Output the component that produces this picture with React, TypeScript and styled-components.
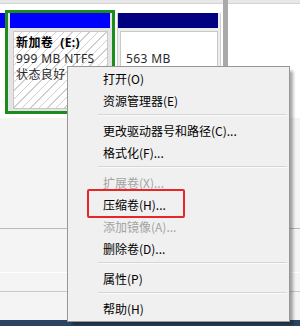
import styled, { createGlobalStyle } from "styled-components";

const Global = createGlobalStyle`
  html, body {
    margin: 0;
    padding: 0;
    background: #fff;
  }
`;

const Page = styled.div`
  position: relative;
  width: 300px;
  height: 326px;
  overflow: hidden;
  display: flex;
  flex-direction: column;
  background: #f4f4f4;
  font-family: "Noto Sans", "Noto Sans CJK SC", sans-serif;
`;

const DiskRow = styled.div`
  display: flex;
  height: 118px;
  background: #fff;
`;

const DiskCanvas = styled.div`
  width: 223px;
  display: flex;
  flex-direction: column;
`;

const TopStrip = styled.div`
  height: 3px;
  background: #e8e8e8;
  border-bottom: 1px solid #d4d4d4;
`;

const Partitions = styled.div`
  display: flex;
  align-items: flex-start;
  padding-top: 6px;
`;

const Stub = styled.div`
  width: 5px;
  margin-top: 3px;
  height: 15px;
  background: #0000f8;
`;

const Selected = styled.div`
  width: 110px;
  box-sizing: border-box;
  border: 3px solid #1c8c1c;
  padding: 0 2px 2px 2px;
  background: #e4e4e4;
`;

const Header = styled.div<{ $color: string }>`
  height: 15px;
  background: ${(p) => p.$color};
`;

const Body = styled.div<{ $hatched?: boolean }>`
  height: 78px;
  margin: 3px 2px 0 3px;
  box-sizing: border-box;
  border: 1px solid #c8c8c8;
  padding: 3px 0 0 2px;
  background-color: #fff;
  background-image: ${(p) =>
    p.$hatched
      ? "repeating-linear-gradient(135deg, #fff 0 5px, #cfcfcf 5px 6px)"
      : "none"};
  font-size: 12px;
  letter-spacing: 0.4px;
  line-height: 16px;
  color: #2a2a2a;
  white-space: nowrap;
  overflow: hidden;
`;

const Title = styled.div`
  font-weight: bold;
  color: #000;
`;

const Plain = styled.div`
  height: 16px;
`;

const Other = styled.div`
  width: 104px;
  margin: 3px 0 0 2px;
  box-sizing: border-box;
  border: 1px solid #cfcfcf;
  border-top: none;
  padding: 0 2px 2px 0;
  background: #ededed;
`;

const OtherBody = styled(Body)`
  margin: 3px 0 0 2px;
  height: 80px;
  padding-left: 5px;
`;

const VLine = styled.div`
  width: 5px;
  background: #a9a9a9;
`;

const RightSide = styled.div`
  flex: 1;
  display: flex;
  flex-direction: column;
  background: #fff;
`;

const Pane = styled.div<{ $h: number; $line: string }>`
  height: ${(p) => p.$h}px;
  border-bottom: 1px solid ${(p) => p.$line};
  flex-shrink: 0;
`;

const Filler = styled.div`
  flex: 1;
`;

const Taskbar = styled.div`
  height: 6px;
  background: #2a4461;
`;

const Menu = styled.div`
  position: absolute;
  left: 67px;
  top: 66px;
  width: 223px;
  box-sizing: border-box;
  background: #f0f0f0;
  border: 1px solid #979797;
  box-shadow: 4px 4px 3px -1px rgba(0, 0, 0, 0.35);
  padding: 0 0 2px;
  font-family: "Noto Sans CJK SC", "Noto Sans", sans-serif;
  font-size: 12px;
`;

const Item = styled.div<{ $disabled?: boolean }>`
  position: relative;
  height: 22px;
  display: flex;
  align-items: center;
  padding-left: 35px;
  color: ${(p) => (p.$disabled ? "#a3a3a3" : "#000")};
  white-space: nowrap;
`;

const Separator = styled.div`
  height: 1px;
  margin: 3px 2px 3px 30px;
  background: #d5d5d5;
  border-bottom: 1px solid #fafafa;
  box-sizing: content-box;
`;

const Highlight = styled.div`
  position: absolute;
  left: 19px;
  top: -4px;
  width: 98px;
  height: 29px;
  box-sizing: border-box;
  border: 2px solid #e8262a;
  border-radius: 2px;
  pointer-events: none;
`;

type Entry = { label?: string; disabled?: boolean; marked?: boolean };

const entries: Entry[] = [
  { label: "打开(O)" },
  { label: "资源管理器(E)" },
  {},
  { label: "更改驱动器号和路径(C)..." },
  { label: "格式化(F)..." },
  {},
  { label: "扩展卷(X)...", disabled: true },
  { label: "压缩卷(H)...", marked: true },
  { label: "添加镜像(A)...", disabled: true },
  { label: "删除卷(D)..." },
  {},
  { label: "属性(P)" },
  {},
  { label: "帮助(H)" },
];

export default function App() {
  return (
    <Page>
      <Global />
      <DiskRow>
        <DiskCanvas>
          <TopStrip />
          <Partitions>
            <Stub />
            <Selected>
              <Header $color="#0000ff" />
              <Body $hatched>
                <Title>新加卷&nbsp;&nbsp;(E:)</Title>
                <Plain>999 MB NTFS</Plain>
                <Plain>状态良好</Plain>
              </Body>
            </Selected>
            <Other>
              <Header $color="#000080" />
              <OtherBody>
                <Plain />
                <Plain>563 MB</Plain>
              </OtherBody>
            </Other>
          </Partitions>
        </DiskCanvas>
        <VLine />
        <RightSide>
          <TopStrip />
        </RightSide>
      </DiskRow>
      <Pane $h={110} $line="#b9b9b9" />
      <Pane $h={43} $line="#ffffff" />
      <Pane $h={18} $line="#c9c9c9" />
      <Filler />
      <Taskbar />
      <Menu>
        {entries.map((e, i) =>
          e.label ? (
            <Item key={i} $disabled={e.disabled}>
              {e.label}
              {e.marked && <Highlight />}
            </Item>
          ) : (
            <Separator key={i} />
          )
        )}
      </Menu>
    </Page>
  );
}
